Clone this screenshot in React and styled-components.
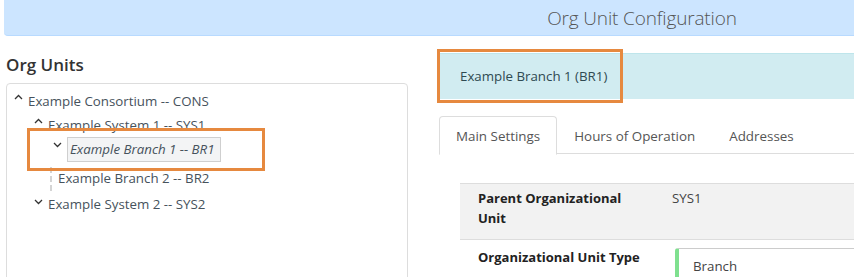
import React from "react";
import styled, { createGlobalStyle } from "styled-components";

const GlobalStyle = createGlobalStyle`
  html, body { margin: 0; padding: 0; background: #fff; overflow: hidden; }
  body { font-family: "Open Sans", "Noto Sans", sans-serif; color: #333; }
`;

const Page = styled.div`
  width: 1280px;
`;

const Header = styled.header`
  margin-left: 4px;
  height: 35px;
  background: #cce5ff;
  border-bottom: 1px solid #b8daff;
  border-bottom-left-radius: 4px;
  display: flex;
  align-items: center;
  justify-content: center;
  font-size: 19px;
  font-weight: 300;
  color: #555;
  letter-spacing: -0.15px;
`;

const Main = styled.div`
  display: flex;
  gap: 30px;
  padding-left: 6px;
`;

const LeftCol = styled.section`
  width: 402px;
  flex: none;
  padding-top: 19px;
`;

const Heading = styled.h2`
  margin: 0 0 8px;
  font-size: 17px;
  line-height: 20px;
  font-weight: 600;
  color: #333;
`;

const TreeBox = styled.div`
  position: relative;
  border: 1px solid #ddd;
  border-radius: 4px;
  height: 220px;
  padding: 7px 0 0 0;
  font-size: 13.3px;
  color: #46525c;
`;

const Node = styled.div`
  display: flex;
  align-items: flex-start;
  height: ${(p) => p.$h || 24}px;
  padding-left: ${(p) => p.$indent}px;
`;

const Caret = styled.svg`
  width: 9px;
  height: 6px;
  margin-top: ${(p) => p.$top || 3}px;
  margin-right: 5px;
  flex: none;
`;

const Label = styled.span`
  line-height: 20px;
  white-space: nowrap;
`;

const SelectedLabel = styled.span`
  line-height: 20px;
  font-style: italic;
  background: #f3f4f5;
  border: 1px solid #cfcfcf;
  padding: 1px 5px 2px 2px;
  white-space: nowrap;
  color: #46525c;
`;

const Connector = styled.span`
  display: inline-block;
  width: 0;
  height: 24px;
  border-left: 2px dashed #d4d4d4;
  margin-right: 6px;
  margin-top: -1px;
`;

const Highlight = styled.div`
  position: absolute;
  left: ${(p) => p.$x}px;
  top: ${(p) => p.$y}px;
  width: ${(p) => p.$w}px;
  height: ${(p) => p.$h}px;
  border: 3px solid #e6893f;
  box-sizing: border-box;
  pointer-events: none;
`;

const RightCol = styled.section`
  flex: 1;
  padding-top: 17px;
`;

const InfoBar = styled.div`
  position: relative;
  height: 46px;
  background: #d1ecf1;
  border-top: 1px solid #bee5eb;
  display: flex;
  align-items: center;
  padding-left: 22px;
  padding-bottom: 1px;
  box-sizing: border-box;
  font-size: 13.3px;
  color: #2f4a52;
`;

const Tabs = styled.nav`
  display: flex;
  margin-top: 17px;
  margin-left: 1px;
  border-bottom: 1px solid #ddd;
  height: 37px;
`;

const Tab = styled.div`
  padding: 0 16px;
  display: flex;
  align-items: center;
  font-size: 13.4px;
  color: #555;
  border: 1px solid ${(p) => (p.$active ? "#ddd" : "transparent")};
  border-bottom-color: ${(p) => (p.$active ? "#fff" : "transparent")};
  border-radius: 4px 4px 0 0;
  background: ${(p) => (p.$active ? "#fff" : "transparent")};
  margin-bottom: -1px;
  height: 37px;
`;

const Table = styled.div`
  margin: 29px 0 0 22px;
  border-top: 1px solid #ddd;
`;

const Row = styled.div`
  display: grid;
  grid-template-columns: 212px 1fr;
  background: ${(p) => (p.$striped ? "#f2f2f2" : "#fff")};
  border-bottom: 1px solid ${(p) => (p.$last ? "transparent" : "#ddd")};
  min-height: ${(p) => p.$h}px;
`;

const Th = styled.div`
  padding: ${(p) => p.$pt}px 30px 0 18px;
  font-size: 13px;
  line-height: 20px;
  font-weight: 700;
  color: #222;
`;

const Td = styled.div`
  padding-top: ${(p) => p.$pt}px;
  font-size: 13.3px;
  line-height: 20px;
  color: #444;
`;

const Select = styled.div`
  margin-left: 3px;
  height: 34px;
  border: 1px solid #ccc;
  border-left: 4px solid #7fe08f;
  border-radius: 3px 0 0 3px;
  padding: 7px 14px 0;
  box-sizing: border-box;
  font-size: 13.3px;
  line-height: 20px;
  color: #444;
`;

const Up = ({ top }) => (
  <Caret $top={top} viewBox="0 0 9 6">
    <path d="M1 5 L4.5 1.5 L8 5" fill="none" stroke="#333" strokeWidth="1.3" />
  </Caret>
);

const Down = ({ top }) => (
  <Caret $top={top} viewBox="0 0 9 6">
    <path d="M1 1 L4.5 4.5 L8 1" fill="none" stroke="#333" strokeWidth="1.3" />
  </Caret>
);

export default function App() {
  return (
    <Page>
      <GlobalStyle />
      <Header>Org Unit Configuration</Header>
      <Main>
        <LeftCol>
          <Heading>Org Units</Heading>
          <TreeBox>
            <Node $indent={7} $h={24}>
              <Up top={3} />
              <Label>Example Consortium -- CONS</Label>
            </Node>
            <Node $indent={27} $h={22}>
              <Up top={3} />
              <Label>Example System 1 -- SYS1</Label>
            </Node>
            <Node $indent={46} $h={31}>
              <Down top={5} />
              <SelectedLabel>Example Branch 1 -- BR1</SelectedLabel>
            </Node>
            <Node $indent={43} $h={26}>
              <Connector />
              <Label>Example Branch 2 -- BR2</Label>
            </Node>
            <Node $indent={27} $h={24}>
              <Down top={5} />
              <Label>Example System 2 -- SYS2</Label>
            </Node>
            <Highlight $x={20} $y={44} $w={238} $h={43} />
          </TreeBox>
        </LeftCol>
        <RightCol>
          <InfoBar>
            Example Branch 1 (BR1)
            <Highlight $x={-1} $y={-5} $w={186} $h={54} />
          </InfoBar>
          <Tabs>
            <Tab $active>Main Settings</Tab>
            <Tab>Hours of Operation</Tab>
            <Tab>Addresses</Tab>
          </Tabs>
          <Table>
            <Row $striped $h={55}>
              <Th $pt={4}>Parent Organizational Unit</Th>
              <Td $pt={4}>SYS1</Td>
            </Row>
            <Row $last $h={40}>
              <Th $pt={7}>Organizational Unit Type</Th>
              <Td $pt={8}>
                <Select>Branch</Select>
              </Td>
            </Row>
          </Table>
        </RightCol>
      </Main>
    </Page>
  );
}
